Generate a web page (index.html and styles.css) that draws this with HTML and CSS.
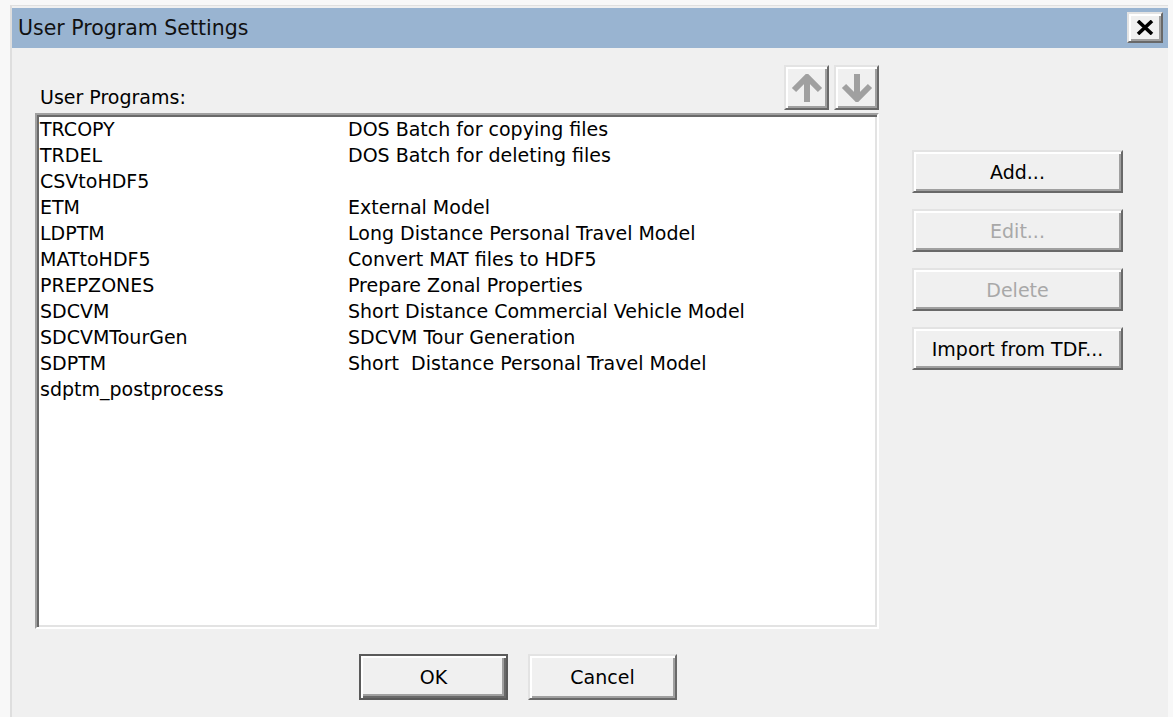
FILE: index.html
```html
<!DOCTYPE html>
<html lang="en">
<head>
<meta charset="utf-8">
<title>User Program Settings</title>
<link rel="stylesheet" href="styles.css">
</head>
<body>
<div class="window">
  <div class="titlebar">
    <span class="title">User Program Settings</span>
    <button class="close" aria-label="Close">
      <svg width="18" height="15" viewBox="0 0 18 15"><path d="M2 1 L16 14 M16 1 L2 14" stroke="#000" stroke-width="3.6" fill="none"/></svg>
    </button>
  </div>
  <div class="client">
    <div class="main">
      <div class="left">
        <div class="list-head">
          <span class="label">User Programs:</span>
          <div class="order-btns">
            <button class="btn arrow" aria-label="Move up">
              <svg width="32" height="28" viewBox="0 0 32 28"><path d="M16 3 V28 M3 16 L16 3 L29 16" stroke="#a0a0a0" stroke-width="6" fill="none"/></svg>
            </button>
            <button class="btn arrow" aria-label="Move down">
              <svg width="32" height="28" viewBox="0 0 32 28"><path d="M16 0 V25 M3 12 L16 25 L29 12" stroke="#a0a0a0" stroke-width="6" fill="none"/></svg>
            </button>
          </div>
        </div>
        <div class="listbox">
          <div class="row"><span class="name">TRCOPY</span><span class="desc">DOS Batch for copying files</span></div>
          <div class="row"><span class="name">TRDEL</span><span class="desc">DOS Batch for deleting files</span></div>
          <div class="row"><span class="name">CSVtoHDF5</span><span class="desc"></span></div>
          <div class="row"><span class="name">ETM</span><span class="desc">External Model</span></div>
          <div class="row"><span class="name">LDPTM</span><span class="desc">Long Distance Personal Travel Model</span></div>
          <div class="row"><span class="name">MATtoHDF5</span><span class="desc">Convert MAT files to HDF5</span></div>
          <div class="row"><span class="name">PREPZONES</span><span class="desc">Prepare Zonal Properties</span></div>
          <div class="row"><span class="name">SDCVM</span><span class="desc">Short Distance Commercial Vehicle Model</span></div>
          <div class="row"><span class="name">SDCVMTourGen</span><span class="desc">SDCVM Tour Generation</span></div>
          <div class="row"><span class="name">SDPTM</span><span class="desc">Short&nbsp; Distance Personal Travel Model</span></div>
          <div class="row"><span class="name">sdptm_postprocess</span><span class="desc"></span></div>
        </div>
      </div>
      <div class="side">
        <button class="btn side-btn">Add...</button>
        <button class="btn side-btn" disabled>Edit...</button>
        <button class="btn side-btn" disabled>Delete</button>
        <button class="btn side-btn">Import from TDF...</button>
      </div>
    </div>
    <div class="footer">
      <button class="btn foot-btn default">OK</button>
      <button class="btn foot-btn">Cancel</button>
    </div>
  </div>
</div>
</body>
</html>
```

FILE: styles.css
```css
* {
  box-sizing: border-box;
}

html, body {
  margin: 0;
  height: 100%;
  overflow: hidden;
}

body {
  background: #f8f8f8;
  font-family: "DejaVu Sans", "Liberation Sans", sans-serif;
  font-size: 19px;
  color: #000;
}

/* dialog frame */
.window {
  margin: 5px 5px 0 10px;
  height: calc(100% - 5px);
  border-top: 1px solid #e0e0e0;
  border-left: 2px solid #dedede;
  background: #f0f0f0;
  padding-top: 2px;
  display: flex;
  flex-direction: column;
}

.titlebar {
  height: 40px;
  flex: none;
  background: #99b4d1;
  display: flex;
  align-items: center;
  justify-content: space-between;
  padding: 0 5px 0 6px;
}

.title {
  font-size: 20.5px;
  color: #111;
}

.close {
  width: 36px;
  height: 31px;
  padding: 0;
  margin-top: -1px;
  background: #f0f0f0;
  border: 2px solid;
  border-color: #e3e3e3 #696969 #696969 #e3e3e3;
  box-shadow: inset 2px 2px #fff, inset -2px -2px #a0a0a0;
  display: flex;
  align-items: center;
  justify-content: center;
}

.client {
  flex: 1;
  display: flex;
  flex-direction: column;
}

.main {
  display: flex;
  padding-left: 23px;
}

.left {
  width: 844px;
  display: flex;
  flex-direction: column;
}

.list-head {
  height: 65px;
  display: flex;
  align-items: flex-end;
}

.label {
  line-height: 22px;
  padding-left: 5px;
  margin-bottom: 5px;
}

.order-btns {
  margin-left: auto;
  margin-bottom: 3px;
  display: flex;
  gap: 5px;
}

/* classic raised push button */
.btn {
  font: inherit;
  color: #000;
  background: #f0f0f0;
  border: 2px solid;
  border-color: #e3e3e3 #696969 #696969 #e3e3e3;
  box-shadow: inset 2px 2px #fff, inset -2px -2px #a0a0a0;
  padding: 0;
  display: flex;
  align-items: center;
  justify-content: center;
}

.btn:disabled {
  color: #a8a8a8;
}

.arrow {
  width: 45px;
  height: 45px;
}

/* sunken list box */
.listbox {
  height: 516px;
  background: #fff;
  border: 2px solid;
  border-color: #a0a0a0 #fff #fff #a0a0a0;
  box-shadow: inset 2px 2px #696969, inset -2px -2px #e3e3e3;
  padding: 1px 0 0 3px;
}

.row {
  display: flex;
  height: 26px;
  line-height: 26px;
  white-space: pre;
}

.name {
  width: 308px;
  flex: none;
}

.side {
  margin-left: 33px;
  padding-top: 102px;
  display: flex;
  flex-direction: column;
  gap: 16px;
}

.side-btn {
  width: 211px;
  height: 43px;
}

.footer {
  display: flex;
  gap: 20px;
  padding-left: 347px;
  margin-top: 25px;
}

.foot-btn {
  width: 149px;
  height: 46px;
}

/* default button carries an extra dark frame */
.default {
  border-color: #5a5a5a;
  box-shadow: inset 2px 2px #fff, inset -2px -2px #696969, inset -4px -4px #a0a0a0;
}
```
